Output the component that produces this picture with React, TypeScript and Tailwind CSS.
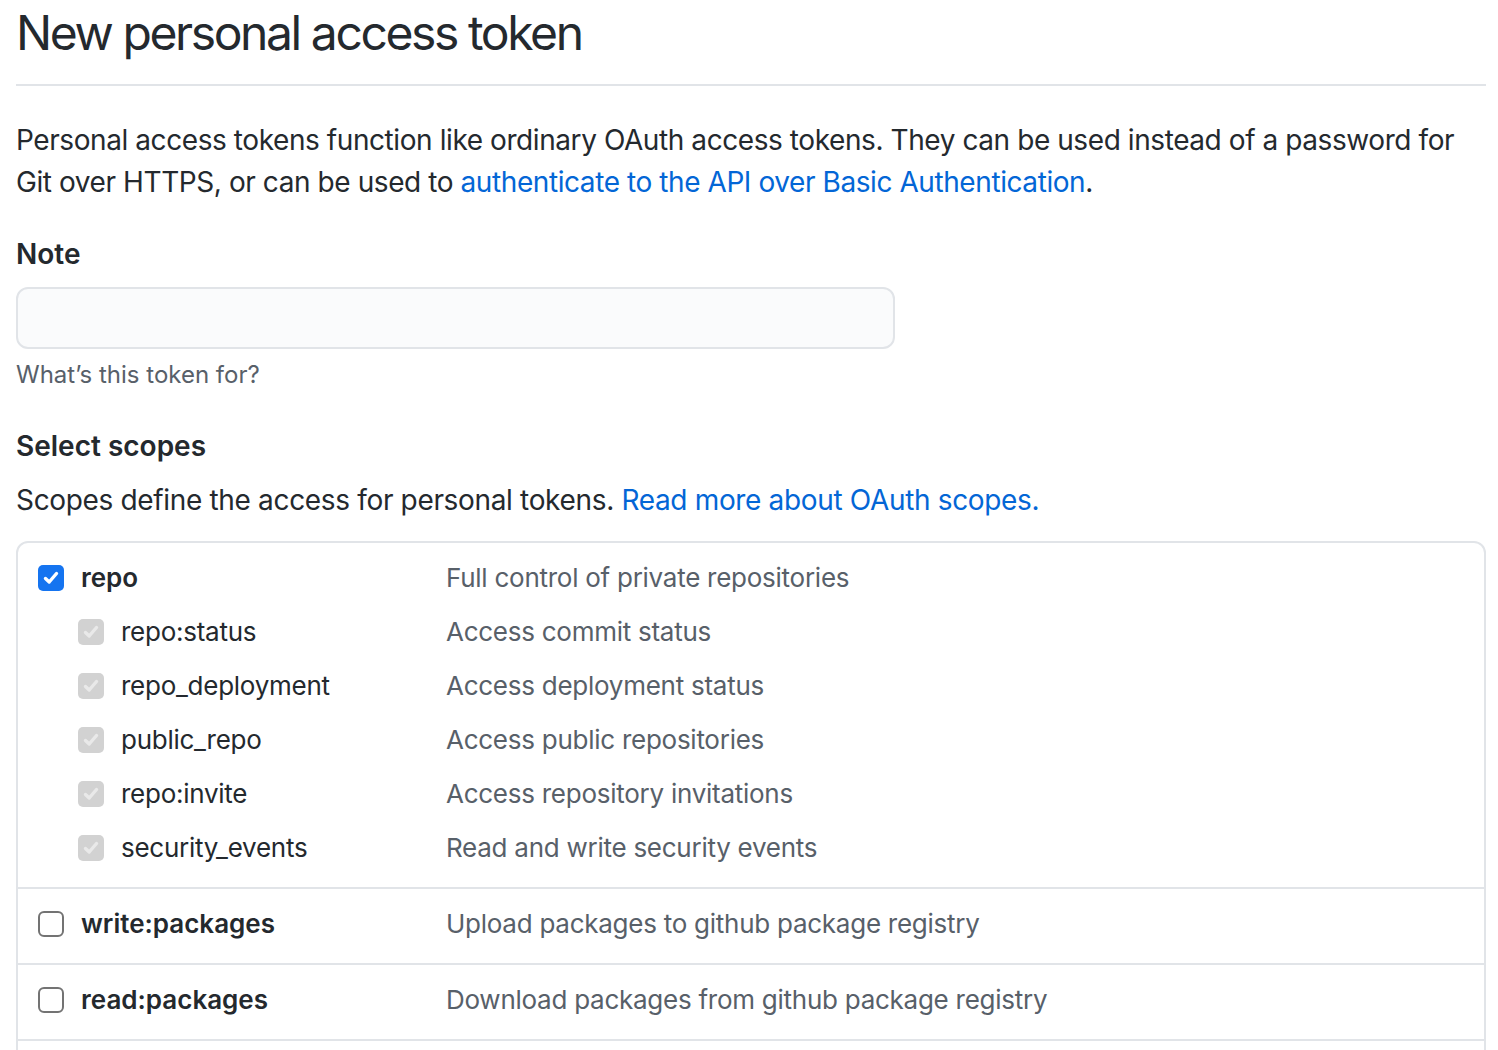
import React from "react";

function Check({ kind }: { kind: "checked" | "disabled" | "empty" }) {
  if (kind === "empty") {
    return <span className="block w-[26px] h-[26px] shrink-0 rounded-[6px] border-2 border-[#737373] bg-white" />;
  }
  const bg = kind === "checked" ? "bg-[#1574f0]" : "bg-[#d2d2d2]";
  const stroke = kind === "checked" ? "#ffffff" : "#e9e9e9";
  return (
    <span className={`flex items-center justify-center w-[26px] h-[26px] shrink-0 rounded-[5px] ${bg}`}>
      <svg width="18" height="18" viewBox="0 0 18 18" fill="none">
        <path d="M3.5 9.5 L7.2 13 L14.5 4.5" stroke={stroke} strokeWidth="3.4" strokeLinecap="round" strokeLinejoin="round" />
      </svg>
    </span>
  );
}

type Row = { name: string; desc: string; sub?: boolean; kind: "checked" | "disabled" | "empty" };

function ScopeRow({ r, first }: { r: Row; first?: boolean }) {
  return (
    <div className={`flex items-center h-[42px] ${first ? "" : "mt-[12px]"}`}>
      <div className={`flex items-center w-[408px] shrink-0 gap-[17px] ${r.sub ? "pl-[40px]" : ""}`}>
        <Check kind={r.kind} />
        <span className={r.sub ? "text-[#24292e] tracking-[-0.01em]" : "font-semibold text-[#24292e]"}>{r.name}</span>
      </div>
      <span className="text-[#586069] tracking-[-0.01em]">{r.desc}</span>
    </div>
  );
}

function Section({ rows, last }: { rows: Row[]; last?: boolean }) {
  return (
    <div className={`pl-[20px] pr-[20px] pt-[14px] pb-[18px] ${last ? "" : "border-b-2 border-[#e1e4e8]"}`}>
      {rows.map((r, i) => (
        <ScopeRow key={r.name} r={r} first={i === 0} />
      ))}
    </div>
  );
}

export default function App() {
  const sections: Row[][] = [
    [
      { name: "repo", desc: "Full control of private repositories", kind: "checked" },
      { name: "repo:status", desc: "Access commit status", sub: true, kind: "disabled" },
      { name: "repo_deployment", desc: "Access deployment status", sub: true, kind: "disabled" },
      { name: "public_repo", desc: "Access public repositories", sub: true, kind: "disabled" },
      { name: "repo:invite", desc: "Access repository invitations", sub: true, kind: "disabled" },
      { name: "security_events", desc: "Read and write security events", sub: true, kind: "disabled" },
    ],
    [{ name: "write:packages", desc: "Upload packages to github package registry", kind: "empty" }],
    [{ name: "read:packages", desc: "Download packages from github package registry", kind: "empty" }],
  ];
  return (
    <div
      className="bg-white h-[1050px] overflow-hidden pl-[16px] pr-[12px] text-[28px] leading-[42px] text-[#24292e]"
      style={{ fontFamily: "Inter, 'Noto Sans', 'Liberation Sans', sans-serif" }}
    >
      <div className="pt-[3px] pb-[21px] border-b-2 border-[#e1e4e8]">
        <h1 className="text-[48px] leading-[60px] font-normal tracking-[-0.05em] text-[#24292e]">New personal access token</h1>
      </div>
      <p className="mt-[33px] whitespace-nowrap tracking-[-0.015em]">
        Personal access tokens function like ordinary OAuth access tokens. They can be used instead of a password for
        <br />
        Git over HTTPS, or can be used to{" "}
        <a className="text-[#0366d6]">authenticate to the API over Basic Authentication</a>.
      </p>
      <div className="mt-[30px] font-semibold">Note</div>
      <div className="mt-[12px] w-[879px] h-[62px] rounded-[12px] border-2 border-[#e1e4e8] bg-[#fafbfc]" />
      <div className="mt-[8px] text-[24px] leading-[36px] text-[#586069]">What’s this token for?</div>
      <div className="mt-[32px] font-semibold">Select scopes</div>
      <div className="mt-[12px] tracking-[-0.012em]">
        Scopes define the access for personal tokens.{" "}
        <a className="text-[#0366d6]">Read more about OAuth scopes.</a>
      </div>
      <div className="mt-[20px] rounded-[12px] border-2 border-[#e1e4e8] text-[26px]">
        {sections.map((s, i) => (
          <Section key={i} rows={s} />
        ))}
        <div className="h-[80px]" />
      </div>
    </div>
  );
}
